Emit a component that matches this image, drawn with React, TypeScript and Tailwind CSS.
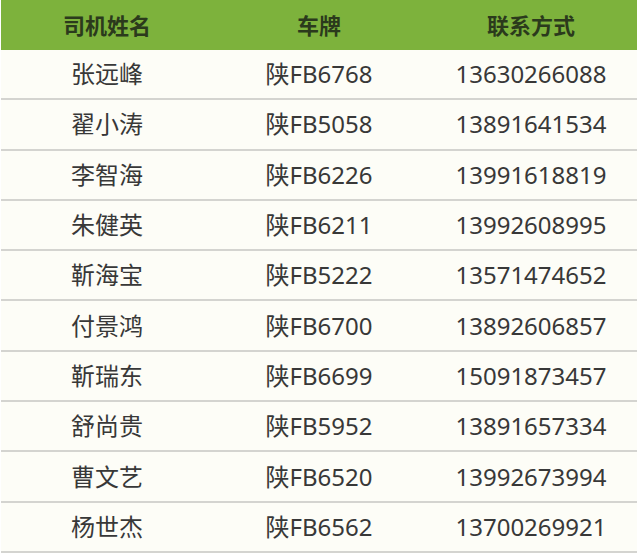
import React from 'react';

const drivers = [
  { name: '张远峰', plate: '陕FB6768', phone: '13630266088' },
  { name: '翟小涛', plate: '陕FB5058', phone: '13891641534' },
  { name: '李智海', plate: '陕FB6226', phone: '13991618819' },
  { name: '朱健英', plate: '陕FB6211', phone: '13992608995' },
  { name: '靳海宝', plate: '陕FB5222', phone: '13571474652' },
  { name: '付景鸿', plate: '陕FB6700', phone: '13892606857' },
  { name: '靳瑞东', plate: '陕FB6699', phone: '15091873457' },
  { name: '舒尚贵', plate: '陕FB5952', phone: '13891657334' },
  { name: '曹文艺', plate: '陕FB6520', phone: '13992673994' },
  { name: '杨世杰', plate: '陕FB6562', phone: '13700269921' },
];

const App: React.FC = () => {
  return (
    <div
      className="w-[640px] h-[555px] bg-white pl-px pr-[3px]"
      style={{ fontFamily: '"Noto Sans", "Noto Sans CJK SC", sans-serif' }}
    >
      <div className="grid grid-cols-3 h-[50px] bg-[#7db23c] items-center text-center text-[22px] font-bold text-[#2b3a1c]">
        <span>司机姓名</span>
        <span>车牌</span>
        <span>联系方式</span>
      </div>
      <div className="bg-[#fdfdf7]">
        {drivers.map((d) => (
          <div
            key={d.plate}
            className="grid grid-cols-3 h-[50.3px] items-center text-center text-[24px] text-[#383838] border-b-2 border-[#d4d4d0]"
          >
            <span>{d.name}</span>
            <span>{d.plate}</span>
            <span>{d.phone}</span>
          </div>
        ))}
      </div>
    </div>
  );
};

export default App;
